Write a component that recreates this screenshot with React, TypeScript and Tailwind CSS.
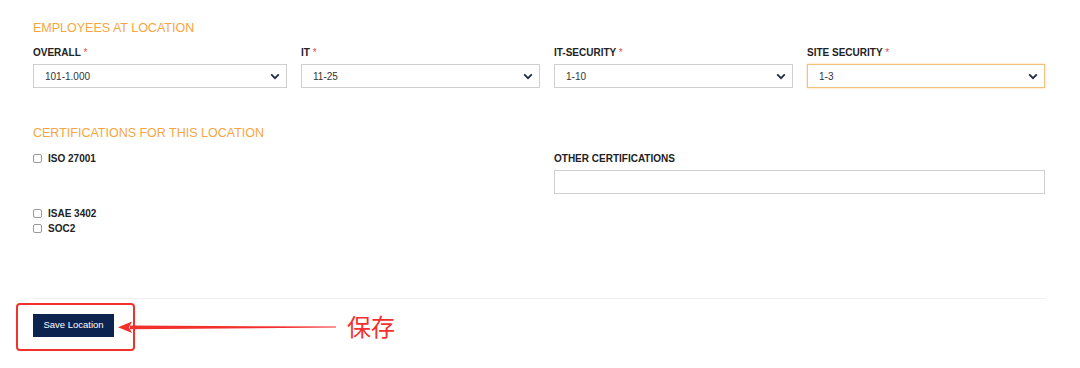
import React from "react";

const font = { fontFamily: '"Liberation Sans", Arial, "Noto Sans CJK SC", sans-serif' };

function Chevron() {
  return (
    <svg width="10" height="7" viewBox="0 0 10 7" className="shrink-0">
      <path d="M1.2 1.4 L5 5.2 L8.8 1.4" fill="none" stroke="#1f2a44" strokeWidth="1.8" />
    </svg>
  );
}

function Field({ label, value, focus }: { label: string; value: string; focus?: boolean }) {
  return (
    <div className="flex flex-col">
      <div className="text-[10px] leading-[12px] font-bold text-[#222] h-[12px]">
        {label} <span className="text-[#d9534f] font-normal">*</span>
      </div>
      <div
        className={
          focus
            ? "mt-[5px] h-[24px] border border-[#f2c27a] shadow-[0_0_2px_rgba(247,165,65,0.5)] flex items-center justify-between pl-[11px] pr-[6px] text-[10px] text-[#333]"
            : "mt-[5px] h-[24px] border border-[#cfcfcf] flex items-center justify-between pl-[11px] pr-[6px] text-[10px] text-[#333]"
        }
      >
        <span>{value}</span>
        <Chevron />
      </div>
    </div>
  );
}

function Check({ label }: { label: string }) {
  return (
    <div className="flex items-center h-[15px]">
      <span className="w-[9px] h-[9px] border border-[#9a9a9a] rounded-[2px] bg-white" />
      <span className="ml-[6px] text-[10px] font-bold text-[#222]">{label}</span>
    </div>
  );
}

export default function App() {
  return (
    <div className="relative w-[1080px] h-[368px] bg-white overflow-hidden" style={font}>
      <div className="pl-[33px] pr-[35px] pt-[20px]">
        <h2 className="text-[12.5px] leading-[16px] text-[#f7a541]">EMPLOYEES AT LOCATION</h2>

        <div className="mt-[11px] grid grid-cols-[254px_239px_239px_238px] gap-x-[14px]">
          <Field label="OVERALL" value="101-1.000" />
          <Field label="IT" value="11-25" />
          <Field label="IT-SECURITY" value="1-10" />
          <Field label="SITE SECURITY" value="1-3" focus />
        </div>

        <h2 className="mt-[37px] text-[12.5px] leading-[16px] text-[#f7a541]">CERTIFICATIONS FOR THIS LOCATION</h2>

        <div className="mt-[10px] grid grid-cols-[507px_491px] gap-x-[14px]">
          <div className="flex flex-col">
            <Check label="ISO 27001" />
            <div className="h-[40px]" />
            <Check label="ISAE 3402" />
            <Check label="SOC2" />
          </div>
          <div className="flex flex-col">
            <div className="text-[10px] leading-[15px] font-bold text-[#222]">OTHER CERTIFICATIONS</div>
            <div className="mt-[4px] h-[24px] border border-[#cfcfcf]" />
          </div>
        </div>

        <div className="mt-[62px] h-px bg-[#efefef]" />

        <div className="mt-[15px]">
          <button className="h-[23px] w-[81px] bg-[#0c2350] text-white text-[9.5px] flex items-center justify-center">
            Save Location
          </button>
        </div>
      </div>

      {/* annotation overlay */}
      <div className="absolute left-[16px] top-[303px] w-[119px] h-[48px] border-2 border-[#f2302c] rounded-[4px]" />
      <svg className="absolute left-0 top-0" width="1080" height="368">
        <polygon points="130,325.6 336,326.6 336,327.6 130,329.2" fill="#f2302c" />
        <polygon points="118,327.3 132,321.5 129,327.3 132,333" fill="#f2302c" />
      </svg>
      <div className="absolute left-[347px] top-[310px] text-[24px] leading-[32px] text-[#f2302c]" style={{ fontFamily: '"Noto Sans CJK SC", sans-serif' }}>
        保存
      </div>
    </div>
  );
}
